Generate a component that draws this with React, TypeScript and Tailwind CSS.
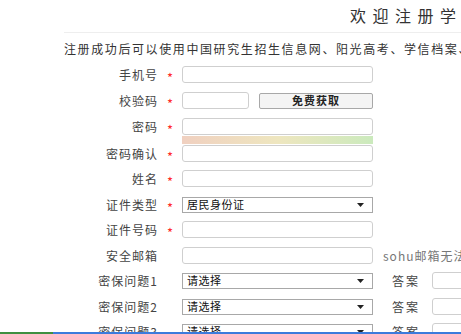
import React from 'react'

const font = "font-['Noto_Sans_CJK_SC','Noto_Sans',sans-serif]"

function Star({ show = true }: { show?: boolean }) {
  return (
    <span className="w-[24px] shrink-0 flex items-center justify-center pt-[5px] text-[13px] leading-none text-[#ff2a2a]">
      {show ? '*' : ''}
    </span>
  )
}

function Label({ text }: { text: string }) {
  return (
    <span className="w-[158px] shrink-0 text-right text-[12px] leading-none tracking-[1px] text-[#444] whitespace-nowrap">
      {text}
    </span>
  )
}

function TextBox({ w = 'w-[191px]' }: { w?: string }) {
  return <div className={`${w} h-[17px] shrink-0 rounded-[3px] border border-[#cfcfcf] bg-white`} />
}

function Select({ value }: { value: string }) {
  return (
    <div className="w-[191px] h-[16px] shrink-0 flex items-center justify-between border border-[#a8a8a8] bg-white pl-[4px] pr-[8px]">
      <span className="text-[11px] leading-none text-[#111] tracking-[0.5px]">{value}</span>
      <svg width="7" height="4" viewBox="0 0 7 4">
        <path d="M0 0 L7 0 L3.5 4 Z" fill="#222" />
      </svg>
    </div>
  )
}

function Row({ label, star = true, mt, children }: { label: string; star?: boolean; mt: string; children: React.ReactNode }) {
  return (
    <div className={`flex items-center h-[17px] ${mt}`}>
      <Label text={label} />
      <Star show={star} />
      {children}
    </div>
  )
}

function QuestionRow({ n, mt }: { n: number; mt: string }) {
  return (
    <Row label={`密保问题${n}`} star={false} mt={mt}>
      <Select value="请选择" />
      <span className="ml-[19px] w-[28px] shrink-0 text-[12px] leading-none tracking-[2px] text-[#444] whitespace-nowrap">答案</span>
      <div className="ml-[12px] shrink-0">
        <TextBox />
      </div>
    </Row>
  )
}

export default function App() {
  return (
    <div className={`relative w-[461px] h-[334px] overflow-hidden bg-white ${font}`}>
      {/* Header */}
      <div className="pl-[64px] pt-[7px]">
        <h1 className="pl-[286px] text-[16px] leading-[16px] font-normal tracking-[6.5px] text-[#333] whitespace-nowrap">
          欢迎注册学信网账号
        </h1>
        <div className="mt-[9px] w-[800px] border-t border-[#eeeeee]" />
        <p className="mt-[10px] text-[12px] leading-none tracking-[1.6px] text-[#333] whitespace-nowrap">
          注册成功后可以使用中国研究生招生信息网、阳光高考、学信档案、学籍学历查询等服务
        </p>
      </div>

      {/* Form */}
      <div className="flex flex-col pt-[11px]">
        <Row label="手机号" mt="mt-[0px]">
          <TextBox />
        </Row>
        <Row label="校验码" mt="mt-[9px]">
          <TextBox w="w-[67px]" />
          <button className="ml-[10px] w-[114px] h-[16px] shrink-0 rounded-[2px] border border-[#a8a8a8] bg-[#f4f4f4] text-[11px] leading-none font-bold tracking-[1px] text-[#222]">
            免费获取
          </button>
        </Row>
        <Row label="密码" mt="mt-[9px]">
          <TextBox />
        </Row>
        <div className="flex mt-[1px]">
          <div className="w-[182px] shrink-0" />
          <div className="w-[191px] h-[8px] bg-gradient-to-r from-[#f0d0c0] via-[#eee6bf] to-[#cbeabd]" />
        </div>
        <Row label="密码确认" mt="mt-[1px]">
          <TextBox />
        </Row>
        <Row label="姓名" mt="mt-[8px]">
          <TextBox />
        </Row>
        <Row label="证件类型" mt="mt-[9px]">
          <Select value="居民身份证" />
        </Row>
        <Row label="证件号码" mt="mt-[8px]">
          <TextBox />
        </Row>
        <Row label="安全邮箱" star={false} mt="mt-[9px]">
          <TextBox />
          <span className="ml-[10px] shrink-0 text-[12px] leading-none tracking-[1px] text-[#777] whitespace-nowrap">
            sohu邮箱无法接收邮件，请使用其他邮箱
          </span>
        </Row>
        <QuestionRow n={1} mt="mt-[8px]" />
        <QuestionRow n={2} mt="mt-[9px]" />
        <QuestionRow n={3} mt="mt-[8px]" />
      </div>

      {/* bottom loading bar */}
      <div className="absolute bottom-0 left-0 right-0 h-[2px] flex">
        <div className="w-[53px] bg-[#3f8f3f]" />
        <div className="flex-1 bg-[#3b7bdc]" />
      </div>
    </div>
  )
}
